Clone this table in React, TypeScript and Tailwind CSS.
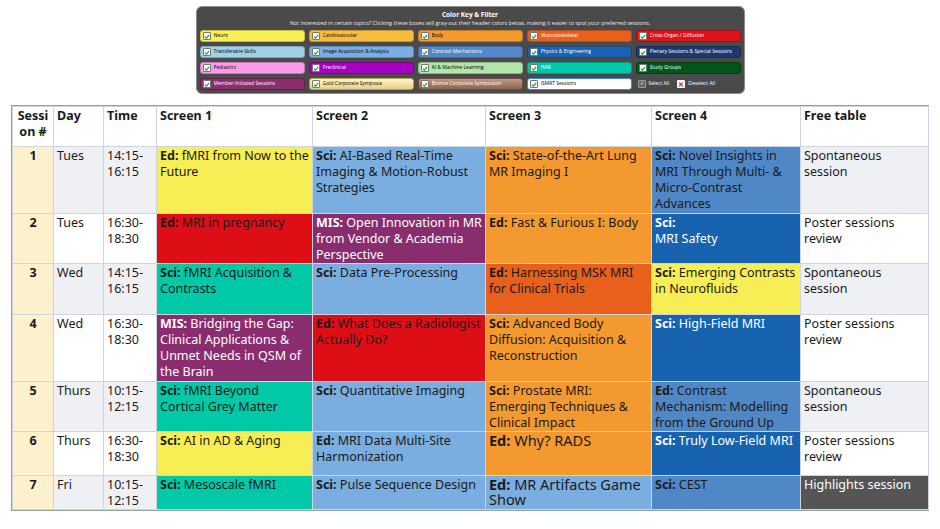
import React from "react";

type Cell = { tag?: string; text: string; bg: string; light?: boolean; big?: boolean };

const chips: { label: string; cls: string }[] = [
  { label: "Neuro", cls: "bg-[#f7ef55] text-black border-[#c9c23a]" },
  { label: "Cardiovascular", cls: "bg-[#f8bb3c] text-black border-[#c99530]" },
  { label: "Body", cls: "bg-[#f39a2e] text-black border-[#c57a22]" },
  { label: "Musculoskeletal", cls: "bg-[#e8611c] text-white border-[#b84c14]" },
  { label: "Cross-Organ / Diffusion", cls: "bg-[#e0121a] text-white border-[#a80d12]" },
  { label: "Transferable Skills", cls: "bg-[#9fd0e6] text-black border-[#7aa8bd]" },
  { label: "Image Acquisition & Analysis", cls: "bg-[#7aaee0] text-black border-[#5c8ab6]" },
  { label: "Contrast Mechanisms", cls: "bg-[#5588c8] text-white border-[#3f6aa0]" },
  { label: "Physics & Engineering", cls: "bg-[#1b63b0] text-white border-[#134a86]" },
  { label: "Plenary Sessions & Special Sessions", cls: "bg-[#1c3a6e] text-white border-[#132a52]" },
  { label: "Pediatrics", cls: "bg-[#f79ae8] text-black border-[#c67aba]" },
  { label: "Preclinical", cls: "bg-[#a800c2] text-white border-[#7e0092]" },
  { label: "AI & Machine Learning", cls: "bg-[#b3e4a9] text-black border-[#8cb884]" },
  { label: "fMRI", cls: "bg-[#00c8a8] text-white border-[#009a82]" },
  { label: "Study Groups", cls: "bg-[#00561b] text-white border-[#003d12]" },
  { label: "Member-Initiated Sessions", cls: "bg-[#8a2e6c] text-white border-[#652050]" },
  { label: "Gold Corporate Symposia", cls: "bg-gradient-to-b from-[#fff6d0] to-[#e8cf80] text-black border-[#b89f50]" },
  { label: "Bronze Corporate Symposium", cls: "bg-gradient-to-b from-[#c09a84] to-[#8e6450] text-white border-[#6e4c3c]" },
  { label: "ISMRT Sessions", cls: "bg-white text-black border-[#3a8ad8]" },
];

const YEL = "bg-[#f7ee55]";
const IMG = "bg-[#7aaee0]";
const ORA = "bg-[#f3992f]";
const CON = "bg-[#4f87c7]";
const RED = "bg-[#de0e17]";
const PUR = "bg-[#8a2d6f]";
const PHY = "bg-[#1863b0]";
const TEA = "bg-[#00c9a8]";
const MSK = "bg-[#e9601d]";

const rows: { n: number; day: string; time: string; cells: Cell[]; free: string; h: string }[] = [
  {
    n: 1, day: "Tues", time: "14:15-16:15", h: "h-[67px]", free: "Spontaneous session",
    cells: [
      { tag: "Ed:", text: "fMRI from Now to the Future", bg: YEL },
      { tag: "Sci:", text: "AI-Based Real-Time Imaging & Motion-Robust Strategies", bg: IMG },
      { tag: "Sci:", text: "State-of-the-Art Lung MR Imaging I", bg: ORA },
      { tag: "Sci:", text: "Novel Insights in MRI Through Multi- & Micro-Contrast Advances", bg: CON },
    ],
  },
  {
    n: 2, day: "Tues", time: "16:30-18:30", h: "h-[50px]", free: "Poster sessions review",
    cells: [
      { tag: "Ed:", text: "MRI in pregnancy", bg: RED },
      { tag: "MIS:", text: "Open Innovation in MR from Vendor & Academia Perspective", bg: PUR, light: true },
      { tag: "Ed:", text: "Fast & Furious I: Body", bg: ORA },
      { tag: "Sci:", text: "\nMRI Safety", bg: PHY, light: true },
    ],
  },
  {
    n: 3, day: "Wed", time: "14:15-16:15", h: "h-[51px]", free: "Spontaneous session",
    cells: [
      { tag: "Sci:", text: "fMRI Acquisition & Contrasts", bg: TEA },
      { tag: "Sci:", text: "Data Pre-Processing", bg: IMG },
      { tag: "Ed:", text: "Harnessing MSK MRI for Clinical Trials", bg: MSK },
      { tag: "Sci:", text: "Emerging Contrasts in Neurofluids", bg: YEL },
    ],
  },
  {
    n: 4, day: "Wed", time: "16:30-18:30", h: "h-[67px]", free: "Poster sessions review",
    cells: [
      { tag: "MIS:", text: "Bridging the Gap: Clinical Applications & Unmet Needs in QSM of the Brain", bg: PUR, light: true },
      { tag: "Ed:", text: "What Does a Radiologist Actually Do?", bg: RED },
      { tag: "Sci:", text: "Advanced Body Diffusion: Acquisition & Reconstruction", bg: ORA },
      { tag: "Sci:", text: "High-Field MRI", bg: PHY, light: true },
    ],
  },
  {
    n: 5, day: "Thurs", time: "10:15-12:15", h: "h-[50px]", free: "Spontaneous session",
    cells: [
      { tag: "Sci:", text: "fMRI Beyond\nCortical Grey Matter", bg: TEA },
      { tag: "Sci:", text: "Quantitative Imaging", bg: IMG },
      { tag: "Sci:", text: "Prostate MRI: Emerging Techniques & Clinical Impact", bg: ORA },
      { tag: "Ed:", text: "Contrast Mechanism: Modelling from the Ground Up", bg: CON },
    ],
  },
  {
    n: 6, day: "Thurs", time: "16:30-18:30", h: "h-[44px]", free: "Poster sessions review",
    cells: [
      { tag: "Sci:", text: "AI in AD & Aging", bg: YEL },
      { tag: "Ed:", text: "MRI Data Multi-Site Harmonization", bg: IMG },
      { tag: "Ed:", text: "Why? RADS", bg: ORA, big: true },
      { tag: "Sci:", text: " Truly Low-Field MRI", bg: PHY, light: true },
    ],
  },
  {
    n: 7, day: "Fri", time: "10:15-12:15", h: "h-[34px]", free: "Highlights session",
    cells: [
      { tag: "Sci:", text: "Mesoscale fMRI", bg: TEA },
      { tag: "Sci:", text: "Pulse Sequence Design", bg: IMG },
      { tag: "Ed:", text: "MR Artifacts Game Show", bg: IMG, big: true },
      { tag: "Sci:", text: "CEST", bg: CON },
    ],
  },
];

const Check = () => (
  <span className="flex h-[8px] w-[8px] shrink-0 items-center justify-center rounded-[1px] border border-[#777] bg-white">
    <svg viewBox="0 0 10 10" className="h-[7px] w-[7px]">
      <path d="M1.5 5.2 L4 7.6 L8.6 2.2" fill="none" stroke="#1ea03a" strokeWidth="2" />
    </svg>
  </span>
);

const ColorKey = () => (
  <div className="mx-auto w-[549px] rounded-[6px] border border-[#8c8c8c] bg-[#4a4a4a] px-[3px] pb-[3px] pt-[3px] text-white [font-family:'Open_Sans',sans-serif]">
    <div className="text-center text-[6.5px] font-bold leading-[9px]">Color Key &amp; Filter</div>
    <div className="text-center text-[5.5px] leading-[8px] text-[#e8e8e8]">
      Not interested in certain topics? Clicking these boxes will gray-out their header colors below, making it easier to spot your preferred sessions.
    </div>
    <div className="mt-[3px] grid grid-cols-5 gap-x-[4px] gap-y-[4px]">
      {chips.map((c) => (
        <div key={c.label} className={`flex h-[12px] items-center gap-[3px] rounded-[3px] border px-[2px] text-[5px] ${c.cls}`}>
          <Check />
          <span className="truncate">{c.label}</span>
        </div>
      ))}
      <div className="flex h-[12px] items-center gap-[8px] px-[2px] text-[5px]">
        <span className="flex items-center gap-[3px]">
          <span className="flex h-[8px] w-[8px] items-center justify-center rounded-[1px] border border-[#999] bg-[#666] text-[5px]">✓</span>
          Select All
        </span>
        <span className="flex items-center gap-[3px]">
          <span className="flex h-[8px] w-[8px] items-center justify-center rounded-[1px] bg-white text-[7px] font-bold leading-none text-[#e0121a]">✕</span>
          Deselect All
        </span>
      </div>
    </div>
  </div>
);

export default function App() {
  const td = "border border-[#cfd5dc] px-[3px] pt-[1px] align-top";
  return (
    <div className="h-[529px] w-[940px] overflow-hidden bg-white pt-[6px] [font-family:'Noto_Sans',sans-serif]">
      <ColorKey />
      <div className="ml-[11px] mt-[11px] w-[918px] border border-[#8fa59a]">
        <table className="w-[916px] table-fixed border-collapse text-[12.5px] leading-[16px] text-[#1a1a1a]">
          <colgroup>
            <col className="w-[41px]" />
            <col className="w-[50px]" />
            <col className="w-[53px]" />
            <col className="w-[156px]" />
            <col className="w-[173px]" />
            <col className="w-[166px]" />
            <col className="w-[149px]" />
            <col className="w-[128px]" />
          </colgroup>
          <thead>
            <tr className="h-[40px] bg-white font-bold">
              <th className={`${td} break-all text-center font-bold`}>Session #</th>
              <th className={`${td} text-left font-bold`}>Day</th>
              <th className={`${td} text-left font-bold`}>Time</th>
              <th className={`${td} text-left font-bold`}>Screen 1</th>
              <th className={`${td} text-left font-bold`}>Screen 2</th>
              <th className={`${td} text-left font-bold`}>Screen 3</th>
              <th className={`${td} text-left font-bold`}>Screen 4</th>
              <th className={`${td} text-left font-bold`}>Free table</th>
            </tr>
          </thead>
          <tbody>
            {rows.map((r, i) => {
              const stripe = i % 2 === 0 ? "bg-[#eef0f4]" : "bg-white";
              const last = i === rows.length - 1;
              return (
                <tr key={r.n} className={r.h}>
                  <td className={`${td} bg-[#fdf0cd] text-center font-bold`}>{r.n}</td>
                  <td className={`${td} ${stripe}`}>{r.day}</td>
                  <td className={`${td} ${stripe}`}>
                    {r.time.split("-")[0]}-
                    <br />
                    {r.time.split("-")[1]}
                  </td>
                  {r.cells.map((c, j) => (
                    <td
                      key={j}
                      className={`${td} ${c.bg} whitespace-pre-line ${c.light ? "text-white" : "text-[#1a1a1a]"} ${c.big ? "text-[14.5px] leading-[15px]" : ""}`}
                    >
                      <span className="font-bold">{c.tag}</span> {c.text}
                    </td>
                  ))}
                  <td className={`${td} ${last ? "bg-[#555555] text-white" : stripe}`}>{r.free}</td>
                </tr>
              );
            })}
          </tbody>
        </table>
      </div>
    </div>
  );
}
